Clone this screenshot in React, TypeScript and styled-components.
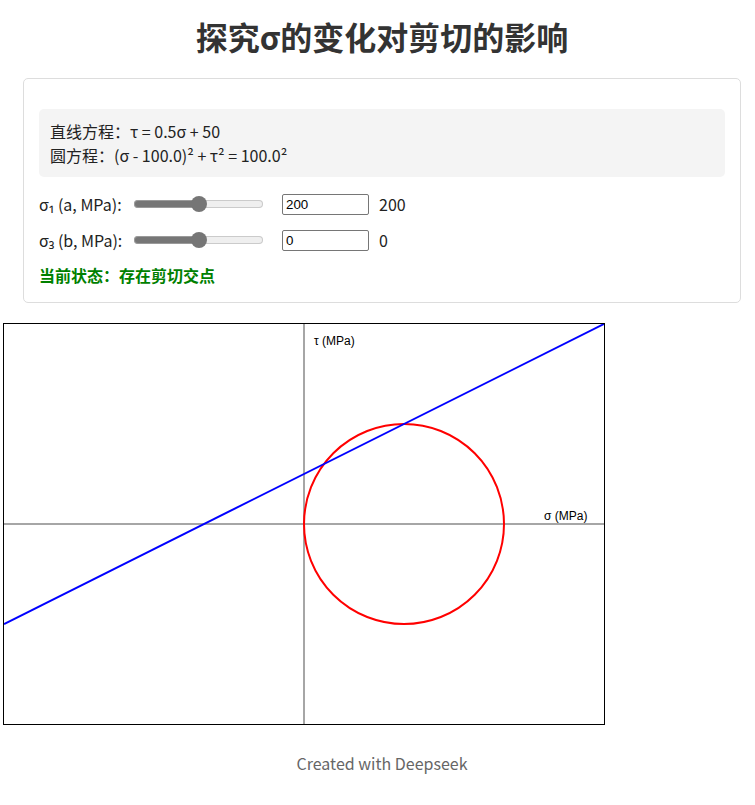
import React from "react";
import styled, { createGlobalStyle } from "styled-components";

const Global = createGlobalStyle`
  html, body { margin: 0; padding: 0; background: #fff; }
  body { font-family: "Noto Sans CJK SC", "Noto Sans", sans-serif; color: #333; }
`;

const Page = styled.div`
  padding: 0 14px 20px 3px;
`;

const Inner = styled.div`
  padding-left: 20px;
`;

const Title = styled.h1`
  margin: 0;
  padding-top: 14px;
  height: 78px;
  box-sizing: border-box;
  text-align: center;
  font-size: 32px;
  line-height: 44px;
  font-weight: 700;
  color: #333;
`;

const Panel = styled.div`
  border: 1px solid #ddd;
  border-radius: 5px;
  padding: 30px 15px 14px 15px;
  height: 225px;
  box-sizing: border-box;
`;

const Equations = styled.div`
  background: #f4f4f4;
  border-radius: 5px;
  padding: 10px 11px;
  font-size: 16px;
  line-height: 24px;
  color: #222;
`;

const Row = styled.div<{ $first?: boolean }>`
  display: flex;
  align-items: center;
  height: 24px;
  margin-top: ${(p) => (p.$first ? "15px" : "12px")};
  font-size: 16px;
  color: #222;
`;

const Label = styled.span`
  width: 93px;
  flex: none;
`;

const Range = styled.input`
  -webkit-appearance: none;
  appearance: none;
  width: 129px;
  height: 16px;
  margin: 2px;
  padding: 0;
  flex: none;
  background: transparent;

  &::-webkit-slider-runnable-track {
    height: 8px;
    border-radius: 4px;
    box-sizing: border-box;
    background: linear-gradient(to right, #767676 0, #767676 50%, #efefef 50%, #efefef 100%);
    box-shadow: inset 0 0 0 1px rgba(178, 178, 178, 0.6);
  }

  &::-webkit-slider-thumb {
    -webkit-appearance: none;
    appearance: none;
    width: 16px;
    height: 16px;
    margin-top: -4px;
    border-radius: 50%;
    background: #767676;
    border: none;
  }
`;

const NumInput = styled.input`
  width: 87px;
  height: 21px;
  box-sizing: border-box;
  margin-left: 17px;
  padding: 1px 3px;
  border: 1px solid #767676;
  border-radius: 2px;
  font-family: "Liberation Sans", Arial, sans-serif;
  font-size: 13.33px;
  color: #000;
`;

const Value = styled.span`
  margin-left: 10px;
`;

const Status = styled.div`
  margin-top: 11px;
  font-size: 16px;
  line-height: 24px;
  font-weight: 700;
  color: #008000;
`;

const ChartBox = styled.div`
  margin-top: 20px;
  width: 600px;
  height: 400px;
  border: 1px solid #000;
`;

const Footer = styled.div`
  margin-top: 26px;
  padding-left: 20px;
  text-align: center;
  font-size: 16px;
  line-height: 24px;
  color: #666;
`;

const AxisLabel = styled.text`
  font-family: "Liberation Sans", Arial, sans-serif;
  font-size: 12px;
  fill: #000;
`;

function Chart() {
  const cx = 300;
  const cy = 200;
  const s = 1;
  const toX = (sig: number) => cx + sig * s;
  const toY = (tau: number) => cy - tau * s;
  const f = (sig: number) => 0.5 * sig + 50;
  return (
    <svg width="600" height="400" viewBox="0 0 600 400" style={{ display: "block" }}>
      <line x1="0" y1={cy} x2="600" y2={cy} stroke="#888" strokeWidth="1.5" />
      <line x1={cx} y1="0" x2={cx} y2="400" stroke="#888" strokeWidth="1.5" />
      <AxisLabel x={cx + 10} y={21}>τ (MPa)</AxisLabel>
      <AxisLabel x={540} y={196}>σ (MPa)</AxisLabel>
      <circle cx={toX(100)} cy={toY(0)} r={100} fill="none" stroke="#ff0000" strokeWidth="2" />
      <line x1={toX(-300)} y1={toY(f(-300))} x2={toX(300)} y2={toY(f(300))} stroke="#0000ff" strokeWidth="2" />
    </svg>
  );
}

export default function App() {
  return (
    <Page>
      <Global />
      <Inner>
        <Title>探究σ的变化对剪切的影响</Title>
        <Panel>
          <Equations>
            <div>直线方程：τ = 0.5σ + 50</div>
            <div>圆方程：(σ - 100.0)² + τ² = 100.0²</div>
          </Equations>
          <Row $first>
            <Label>σ₁ (a, MPa):</Label>
            <Range type="range" min={0} max={100} defaultValue={50} />
            <NumInput type="text" defaultValue="200" />
            <Value>200</Value>
          </Row>
          <Row>
            <Label>σ₃ (b, MPa):</Label>
            <Range type="range" min={0} max={100} defaultValue={50} />
            <NumInput type="text" defaultValue="0" />
            <Value>0</Value>
          </Row>
          <Status>当前状态：存在剪切交点</Status>
        </Panel>
      </Inner>
      <ChartBox>
        <Chart />
      </ChartBox>
      <Footer>Created with Deepseek</Footer>
    </Page>
  );
}
